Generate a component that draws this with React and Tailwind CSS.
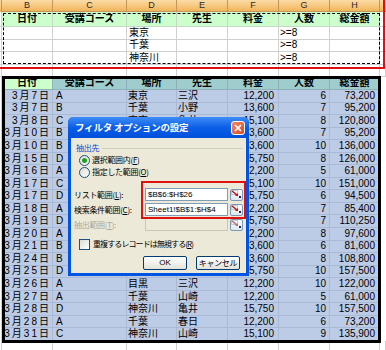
import React from "react";

const COLS = "grid grid-cols-[2px_51px_74px_50px_51px_51px_51px_50px_6px]";

const rows = [
  ["3月7日", "A", "東京", "三沢", "12,200", "6", "73,200"],
  ["3月7日", "B", "千葉", "小野", "13,600", "7", "95,200"],
  ["3月8日", "C", "東京", "亀井", "15,100", "8", "120,800"],
  ["3月10日", "B", "", "", "13,600", "7", "95,200"],
  ["3月10日", "B", "", "", "13,600", "10", "136,000"],
  ["3月15日", "D", "", "", "15,750", "8", "126,000"],
  ["3月16日", "A", "", "", "12,200", "5", "61,000"],
  ["3月17日", "C", "", "", "15,100", "10", "151,000"],
  ["3月17日", "D", "", "", "15,750", "6", "94,500"],
  ["3月18日", "A", "", "", "12,200", "7", "85,400"],
  ["3月19日", "D", "", "", "15,750", "7", "110,250"],
  ["3月20日", "A", "", "", "12,200", "8", "97,600"],
  ["3月21日", "B", "", "", "13,600", "6", "81,600"],
  ["3月24日", "B", "", "", "13,600", "8", "108,800"],
  ["3月25日", "D", "", "", "15,750", "10", "157,500"],
  ["3月26日", "A", "目黒", "三沢", "12,200", "10", "122,000"],
  ["3月27日", "A", "千葉", "山崎", "12,200", "5", "61,000"],
  ["3月28日", "D", "神奈川", "亀井", "15,750", "10", "157,500"],
  ["3月28日", "A", "千葉", "春日", "12,200", "6", "73,200"],
  ["3月31日", "C", "神奈川", "山崎", "15,100", "9", "135,900"],
];

const headers = ["日付", "受講コース", "場所", "先生", "料金", "人数", "総金額"];

function RangeButton({ disabled }) {
  return (
    <div className="w-[13px] h-[12px] rounded-[2px] border border-[#7a97b8] bg-gradient-to-b from-white to-[#dfe6ee] flex items-center justify-center">
      <svg width="11" height="9" viewBox="0 0 11 9">
        <rect x="0.5" y="0.5" width="6" height="4" fill="none" stroke="#9a9a9a" strokeWidth="1" strokeDasharray="1 1" />
        <path d="M1 1 L6 5" stroke={disabled ? "#c07070" : "#c81010"} strokeWidth="1.6" />
        <path d="M4 6 L7 6 L7 3 Z" fill={disabled ? "#c07070" : "#c81010"} />
        <rect x="8" y="6" width="2" height="2" fill="#1a2a5a" />
      </svg>
    </div>
  );
}

function Radio({ checked }) {
  return (
    <div className="w-[11px] h-[11px] rounded-full border border-[#1c5180] bg-gradient-to-br from-[#dcdcd6] to-white flex items-center justify-center">
      {checked && <div className="w-[5px] h-[5px] rounded-full bg-[#21a121]" />}
    </div>
  );
}

export default function App() {
  return (
    <div className="relative w-[386px] h-[350px] overflow-hidden bg-white text-black leading-none font-['Liberation_Sans','Noto_Sans_CJK_JP',sans-serif] text-[10px]">
      {/* column header */}
      <div className={`${COLS} h-[12px]`}>
        <div className="bg-gradient-to-b from-[#fbdca6] to-[#f2b55a] border-r border-[#c4965a]" />
        {["B", "C", "D", "E", "F", "G", "H"].map((l) => (
          <div key={l} className="bg-gradient-to-b from-[#fbdca6] to-[#f2b55a] border-r border-b border-[#c4965a] flex items-center justify-center text-[9px] text-[#2a2a2a] font-['Liberation_Sans',sans-serif]">
            {l}
          </div>
        ))}
        <div className="bg-gradient-to-b from-[#fbdca6] to-[#f2b55a] border-b border-[#c4965a]" />
      </div>

      {/* criteria header row */}
      <div className={`${COLS} h-[15px]`}>
        <div className="border-r border-b border-[#d0d0d0]" />
        {headers.map((h) => (
          <div key={h} className="bg-[#ccffcc] border-r border-b border-[#c8d8c8] flex items-center justify-center font-bold">
            {h}
          </div>
        ))}
        <div className="border-b border-[#d0d0d0]" />
      </div>

      {/* criteria rows */}
      {["東京", "千葉", "神奈川"].map((p) => (
        <div key={p} className={`${COLS} h-[12.5px]`}>
          <div className="border-r border-b border-[#d0d0d0]" />
          <div className="border-r border-b border-[#d0d0d0]" />
          <div className="border-r border-b border-[#d0d0d0]" />
          <div className="border-r border-b border-[#d0d0d0] flex items-center pl-[2px]">{p}</div>
          <div className="border-r border-b border-[#d0d0d0]" />
          <div className="border-r border-b border-[#d0d0d0]" />
          <div className="border-r border-b border-[#d0d0d0] flex items-center pl-[1px]">&gt;=8</div>
          <div className="border-r border-b border-[#d0d0d0]" />
          <div className="border-b border-[#d0d0d0]" />
        </div>
      ))}

      {/* blank row */}
      <div className={`${COLS} h-[12.5px]`}>
        {Array.from({ length: 9 }).map((_, i) => (
          <div key={i} className="border-r border-b border-[#d0d0d0]" />
        ))}
      </div>

      {/* table header */}
      <div className={`${COLS} h-[13px]`}>
        <div className="border-r border-[#d0d0d0]" />
        {headers.map((h, i) => (
          <div key={h} className={`${i === 0 ? "bg-[#ccffcc]" : "bg-[#9fcccc]"} border-r border-b border-[#8fb0b8] flex items-center justify-center font-bold`}>
            {h}
          </div>
        ))}
        <div />
      </div>

      {/* data rows */}
      {rows.map((r, idx) => (
        <div key={idx} className={`${COLS} h-[12.55px]`}>
          <div className="border-r border-[#d0d0d0]" />
          <div className="bg-[#bccbe6] border-r border-b border-[#aab9d4] flex items-center justify-end pr-[1px] tracking-[2px]">{r[0]}</div>
          <div className="bg-[#bccbe6] border-r border-b border-[#aab9d4] flex items-center pl-[3px]">{r[1]}</div>
          <div className="bg-[#bccbe6] border-r border-b border-[#aab9d4] flex items-center pl-[1px]">{r[2]}</div>
          <div className="bg-[#bccbe6] border-r border-b border-[#aab9d4] flex items-center pl-[1px]">{r[3]}</div>
          <div className="bg-[#bccbe6] border-r border-b border-[#aab9d4] flex items-center justify-end pr-[4px]">{r[4]}</div>
          <div className="bg-[#bccbe6] border-r border-b border-[#aab9d4] flex items-center justify-end pr-[3px]">{r[5]}</div>
          <div className="bg-[#bccbe6] border-r border-b border-[#aab9d4] flex items-center justify-end pr-[4px]">{r[6]}</div>
          <div />
        </div>
      ))}

      {/* rows below */}
      <div className={`${COLS} h-[12.5px]`}>
        {Array.from({ length: 9 }).map((_, i) => (
          <div key={i} className="border-r border-b border-[#d0d0d0]" />
        ))}
      </div>

      {/* copy marquee */}
      <div className="absolute left-[3px] top-[13px] w-[377px] h-[51px] border border-dashed border-black pointer-events-none" />
      {/* red annotation */}
      <div className="absolute left-[-6px] top-[-4px] w-[391px] h-[73px] border-r-2 border-b-2 border-[#e01010] pointer-events-none" />
      {/* table thick border */}
      <div className="absolute left-[2px] top-[76px] w-[379px] h-[267px] border-[3px] border-black pointer-events-none" />

      {/* dialog */}
      <div className="absolute left-[68px] top-[117px] w-[181px] h-[159px] bg-[#0054e3] rounded-t-[6px] px-[3px] pb-[3px] flex flex-col font-['Noto_Sans_CJK_JP',sans-serif]">
        <div className="h-[21px] shrink-0 flex items-center justify-between bg-gradient-to-b from-[#3d8cf6] via-[#0a5ee8] to-[#0050dc] rounded-t-[5px] -mx-[3px] pl-[7px] pr-[4px]">
          <span className="text-white font-bold text-[9.5px] tracking-[-0.2px]">フィルタ オプションの設定</span>
          <div className="w-[14px] h-[14px] rounded-[3px] border border-white bg-gradient-to-br from-[#f0876a] to-[#d24a25] flex items-center justify-center">
            <svg width="8" height="8" viewBox="0 0 8 8">
              <path d="M1 1 L7 7 M7 1 L1 7" stroke="white" strokeWidth="1.7" />
            </svg>
          </div>
        </div>
        <div className="relative flex-1 bg-[#ece9d8] text-[8px] tracking-[-0.3px] px-[3px] pt-[5px] whitespace-nowrap">
          <div className="flex items-center gap-[3px] h-[10px] pl-[2px]">
            <span className="text-[#0046d5]">抽出先</span>
            <div className="flex-1 h-px bg-[#d0d0bf]" />
          </div>
          <div className="flex items-center gap-[2px] pl-[5px] mt-[1px] h-[12px]">
            <Radio checked />
            <span>選択範囲内(<span className="underline">F</span>)</span>
          </div>
          <div className="flex items-center gap-[2px] pl-[5px] h-[12px]">
            <Radio />
            <span>指定した範囲(<span className="underline">O</span>)</span>
          </div>
          <div className="flex flex-col gap-[2px] mt-[10px]">
            <div className="flex items-center h-[13px]">
              <span className="w-[71px]">リスト範囲(<span className="underline">L</span>):</span>
              <div className="w-[83px] h-[13px] bg-white border border-[#7f9db9] flex items-center pl-[2px] font-['Liberation_Sans',sans-serif] text-[8px] tracking-normal">$B$6:$H$26</div>
              <div className="ml-[2px]"><RangeButton /></div>
            </div>
            <div className="flex items-center h-[13px]">
              <span className="w-[71px]">検索条件範囲(<span className="underline">C</span>):</span>
              <div className="w-[83px] h-[13px] bg-white border border-[#7f9db9] flex items-center pl-[2px] font-['Liberation_Sans',sans-serif] text-[8px] tracking-normal">Sheet1!$B$1:$H$4</div>
              <div className="ml-[2px]"><RangeButton /></div>
            </div>
            <div className="flex items-center h-[13px] text-[#aca899]">
              <span className="w-[71px]">抽出範囲(<span className="underline">T</span>):</span>
              <div className="w-[83px] h-[13px] border border-[#c9c7ba] bg-[#ece9d8]" />
              <div className="ml-[2px]"><RangeButton disabled /></div>
            </div>
          </div>
          <div className="flex items-center gap-[3px] pl-[5px] mt-[7px] h-[12px]">
            <div className="w-[11px] h-[11px] border border-[#1c5180] bg-gradient-to-br from-[#dcdcd6] to-white" />
            <span className="tracking-[-0.9px]">重複するレコードは無視する(<span className="underline">R</span>)</span>
          </div>
          <div className="flex justify-end gap-[9px] mt-[6px] pr-[3px]">
            <div className="w-[44px] h-[14px] rounded-[2px] border border-[#003c74] bg-gradient-to-b from-white to-[#e3e2da] flex items-center justify-center font-['Liberation_Sans',sans-serif] text-[8px] tracking-normal">OK</div>
            <div className="w-[44px] h-[14px] rounded-[2px] border border-[#003c74] bg-gradient-to-b from-white to-[#e3e2da] flex items-center justify-center">キャンセル</div>
          </div>
          {/* red annotation around range inputs */}
          <div className="absolute left-[70px] top-[43px] w-[105px] h-[38px] border-2 border-[#e01010] pointer-events-none" />
        </div>
      </div>
    </div>
  );
}
